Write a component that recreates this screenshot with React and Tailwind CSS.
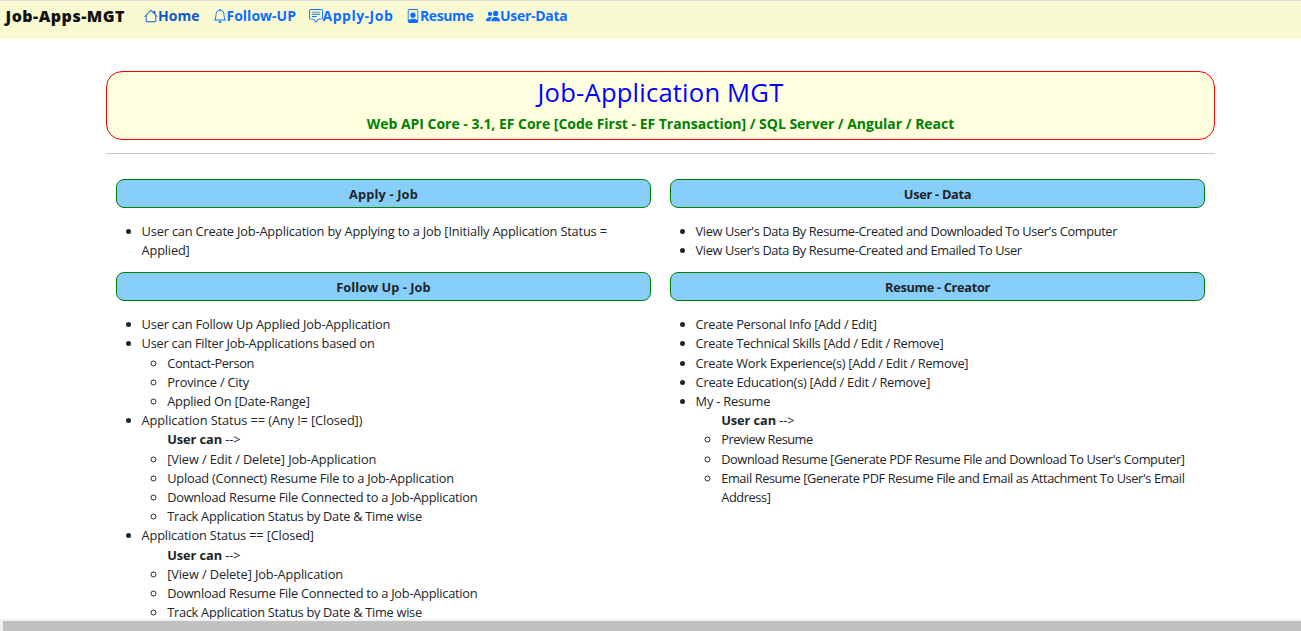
import React from "react";
import { BsHouse, BsBell, BsChatSquareText, BsFilePerson, BsPeopleFill } from "react-icons/bs";

const links = [
  { label: "Home", Icon: BsHouse, color: "text-[#0a58ca]", box: "w-[68.5px]" },
  { label: "Follow-UP", Icon: BsBell, color: "text-[#0d6efd]", box: "w-[96px]" },
  { label: "Apply-Job", Icon: BsChatSquareText, color: "text-[#0d6efd]", box: "w-[97.5px] tracking-[0.5px]" },
  { label: "Resume", Icon: BsFilePerson, color: "text-[#0d6efd]", box: "w-[80px] tracking-[-0.4px]" },
  { label: "User-Data", Icon: BsPeopleFill, color: "text-[#0d6efd]", box: "w-[90px] tracking-[-0.3px]" },
];

function Card({ title, spacing, children }) {
  return (
    <section>
      <h2 className={"h-[29px] rounded-[8px] border border-[#008000] bg-[#87cefa] text-center font-bold leading-[28px] " + spacing}>
        {title}
      </h2>
      <ul className="mb-[11.4px] mt-[14.2px] list-disc pl-[25.6px]">{children}</ul>
    </section>
  );
}

function Sub({ children }) {
  return <ul className="list-[circle] pl-[25.6px]">{children}</ul>;
}

function UserCan() {
  return (
    <li className="list-none tracking-[-0.08px]">
      <b>User can</b> {"-->"}
    </li>
  );
}

export default function App() {
  return (
    <div className="flex h-[631px] flex-col overflow-hidden bg-white font-['Open_Sans','Noto_Sans',sans-serif] text-[12.8px] leading-[19.2px] text-[#212529]">
      <nav className="flex h-[39px] shrink-0 items-start whitespace-nowrap border-t border-[#dcdcdc] bg-[#fafad2] pl-[5.5px] font-bold">
        <span className="mt-[3px] w-[138.5px] text-[16px] font-extrabold leading-6 tracking-[0.5px] text-[#111]">Job-Apps-MGT</span>
        {links.map(({ label, Icon, color, box }) => (
          <a key={label} className={"mt-[5px] flex shrink-0 items-center text-[14px] leading-5 " + color + " " + box}>
            <Icon className="size-[14px] shrink-0" />
            {label}
          </a>
        ))}
      </nav>
      <main className="min-h-0 flex-1 overflow-hidden pl-[106px] pr-[86px] pt-8 tracking-[-0.28px]">
        <header className="h-[69px] rounded-[16px] border border-[#ff0000] bg-[#ffffe0] text-center">
          <h1 className="mt-[5px] text-[25.6px] font-medium leading-[31px] tracking-[0.2px] text-[#0000ff]">Job-Application MGT</h1>
          <p className="mt-[6px] text-[14px] font-bold leading-5 tracking-[-0.02px] text-[#008000]">
            Web API Core - 3.1, EF Core [Code First - EF Transaction] / SQL Server / Angular / React
          </p>
        </header>
        <hr className="mb-[25px] mt-[13px] border-[#c8c9ca]" />
        <div className="grid grid-cols-2 gap-x-[19px] px-[10px]">
          <div>
            <Card title="Apply - Job" spacing="tracking-[0.15px]">
              <li className="whitespace-nowrap tracking-[-0.175px]">
                User can Create Job-Application by Applying to a Job [Initially Application Status =<br />
                Applied]
              </li>
            </Card>
            <Card title="Follow Up - Job" spacing="tracking-[0.05px]">
              <li className="tracking-[-0.18px]">User can Follow Up Applied Job-Application</li>
              <li className="tracking-[-0.25px]">
                User can Filter Job-Applications based on
                <Sub>
                  <li className="tracking-[-0.36px]">Contact-Person</li>
                  <li className="tracking-[-0.22px]">Province / City</li>
                  <li className="tracking-[-0.21px]">Applied On [Date-Range]</li>
                </Sub>
              </li>
              <li className="tracking-[-0.09px]">
                Application Status == (Any != [Closed])
                <Sub>
                  <UserCan />
                  <li className="tracking-[-0.12px]">[View / Edit / Delete] Job-Application</li>
                  <li className="tracking-[-0.22px]">Upload (Connect) Resume File to a Job-Application</li>
                  <li className="tracking-[-0.24px]">Download Resume File Connected to a Job-Application</li>
                  <li className="tracking-[-0.28px]">Track Application Status by Date &amp; Time wise</li>
                </Sub>
              </li>
              <li className="tracking-[-0.16px]">
                Application Status == [Closed]
                <Sub>
                  <UserCan />
                  <li className="tracking-[-0.12px]">[View / Delete] Job-Application</li>
                  <li className="tracking-[-0.24px]">Download Resume File Connected to a Job-Application</li>
                  <li className="tracking-[-0.28px]">Track Application Status by Date &amp; Time wise</li>
                </Sub>
              </li>
            </Card>
          </div>
          <div>
            <Card title="User - Data" spacing="tracking-[-0.3px]">
              <li className="tracking-[-0.375px]">View User's Data By Resume-Created and Downloaded To User's Computer</li>
              <li className="tracking-[-0.375px]">View User's Data By Resume-Created and Emailed To User</li>
            </Card>
            <Card title="Resume - Creator" spacing="tracking-[-0.33px]">
              <li className="tracking-[-0.3px]">Create Personal Info [Add / Edit]</li>
              <li>Create Technical Skills [Add / Edit / Remove]</li>
              <li>Create Work Experience(s) [Add / Edit / Remove]</li>
              <li className="tracking-[-0.25px]">Create Education(s) [Add / Edit / Remove]</li>
              <li className="tracking-[-0.2px]">
                My - Resume
                <Sub>
                  <UserCan />
                  <li className="tracking-[-0.48px]">Preview Resume</li>
                  <li className="tracking-[-0.4px]">Download Resume [Generate PDF Resume File and Download To User's Computer]</li>
                  <li className="tracking-[-0.4px]">
                    Email Resume [Generate PDF Resume File and Email as Attachment To User's Email<br />
                    Address]
                  </li>
                </Sub>
              </li>
            </Card>
          </div>
        </div>
      </main>
      <div className="h-3 shrink-0 bg-[#f1f1f1] pl-[3px] pt-[2px]">
        <div className="h-full bg-[#c1c1c1]" />
      </div>
    </div>
  );
}
